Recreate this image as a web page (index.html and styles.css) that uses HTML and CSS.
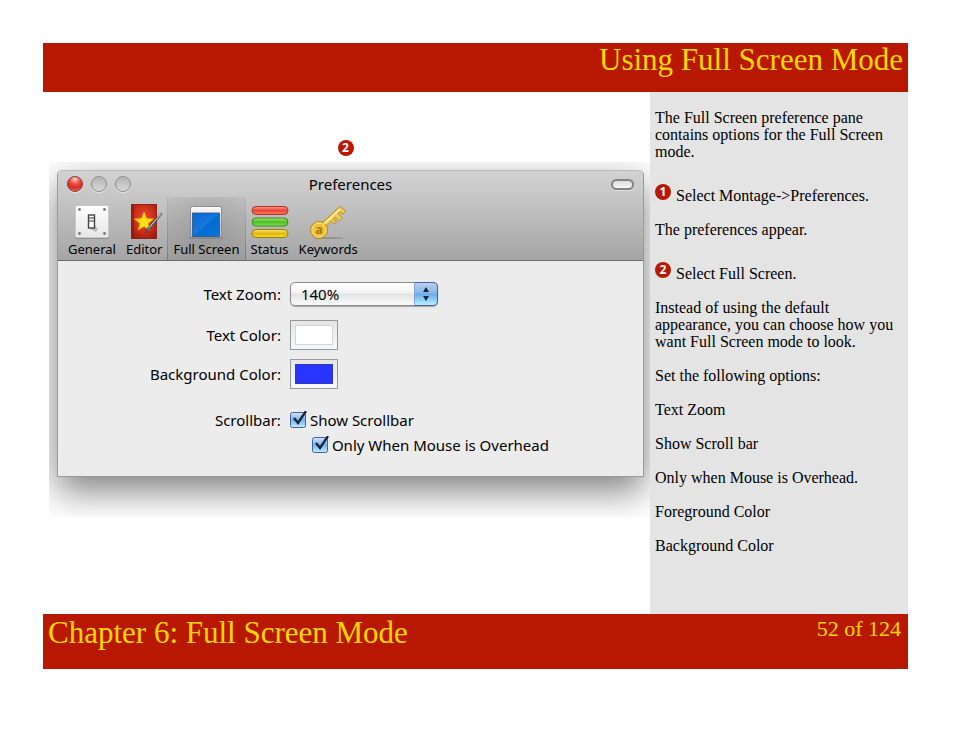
FILE: index.html
```html
<!DOCTYPE html>
<html lang="en">

<head>
    <meta charset="UTF-8">
    <meta name="viewport" content="width=device-width, initial-scale=1.0">
    <title>Using Full Screen Mode</title>
    <link rel="stylesheet" href="styles.css">
</head>

<body>
    <header class="page-header">
        <h1>Using Full Screen Mode</h1>
    </header>

    <main class="page-content">
        <!-- The preferences window with its callout number -->
        <section class="figure">
            <div class="callout"><span class="badge">2</span></div>
            <div class="window-backdrop">
                <div class="window">
                    <div class="window-top">
                        <div class="title-bar">
                            <div class="window-buttons">
                                <button class="window-button close-button" aria-label="Close"></button>
                                <button class="window-button" aria-label="Minimize"></button>
                                <button class="window-button" aria-label="Zoom"></button>
                            </div>
                            <h2>Preferences</h2>
                            <button class="toolbar-toggle" aria-label="Toggle toolbar"></button>
                        </div>
                        <nav class="toolbar">
                            <button class="tool">
                                <svg width="36" height="36" viewBox="0 0 36 36">
                                    <defs>
                                        <linearGradient id="plate" x1="0" y1="0" x2="0" y2="1">
                                            <stop offset="0" stop-color="#fff" />
                                            <stop offset="1" stop-color="#e6e6e6" />
                                        </linearGradient>
                                    </defs>
                                    <path d="M1 34h34" stroke="#858585" stroke-width="1.5" />
                                    <rect x="1.5" y="1.5" width="33" height="32" rx="1" fill="url(#plate)" stroke="#c9c9c9" />
                                    <g fill="#777">
                                        <circle cx="5.5" cy="5.5" r="1.4" />
                                        <circle cx="30.5" cy="5.5" r="1.4" />
                                        <circle cx="5.5" cy="29.5" r="1.4" />
                                        <circle cx="30.5" cy="29.5" r="1.4" />
                                    </g>
                                    <path d="M20 20l4 5-2 3-6-3z" fill="#bbb" />
                                    <rect x="14.5" y="11" width="6" height="13" fill="#fff" stroke="#444" stroke-width="1.4" />
                                    <path d="M15 14h5M15 17h5" stroke="#777" stroke-width="1.3" />
                                </svg>
                                General
                            </button>
                            <button class="tool">
                                <svg width="36" height="36" viewBox="0 0 36 36">
                                    <defs>
                                        <radialGradient id="cover" cx=".5" cy=".4" r=".7">
                                            <stop offset="0" stop-color="#e8482c" />
                                            <stop offset=".6" stop-color="#c92c18" />
                                            <stop offset="1" stop-color="#971a10" />
                                        </radialGradient>
                                    </defs>
                                    <rect x="5.5" y=".5" width="25" height="34" fill="url(#cover)" stroke="#8d2418" />
                                    <path d="M7 1v33" stroke="#7c170d" />
                                    <path d="M18 8l2.5 6.500 7 .5-5.500 4.500 2 6.500-6-3.500-6 3.500 2-6.500L8.500 15l7-.5z" fill="#ffe015" stroke="#f7b412" stroke-width=".7" />
                                    <path d="M35.500 9L23 22l-4 7 6-5L36 10z" fill="#65757c" stroke="#3c484d" stroke-width=".7" />
                                    <path d="M35 10L23 23.500" stroke="#c4d0d3" />
                                </svg>
                                Editor
                            </button>
                            <button class="tool selected">
                                <svg width="36" height="36" viewBox="0 0 36 36">
                                    <defs>
                                        <linearGradient id="screen" x1="0" y1="0" x2="1" y2="1">
                                            <stop offset="0" stop-color="#0a66cf" />
                                            <stop offset=".5" stop-color="#1479dc" />
                                            <stop offset=".5" stop-color="#066bd2" />
                                            <stop offset="1" stop-color="#0874dc" />
                                        </linearGradient>
                                        <linearGradient id="frame" x1="0" y1="0" x2="0" y2="1">
                                            <stop offset="0" stop-color="#fafafa" />
                                            <stop offset="1" stop-color="#bcbcbc" />
                                        </linearGradient>
                                    </defs>
                                    <path d="M1 34h34" stroke="#888" stroke-width="2" />
                                    <path d="M2.500 33.500V4.500q0-2 2-2h27q2 0 2 2v29z" fill="url(#frame)" stroke="#8d8d8d" />
                                    <rect x="4.500" y="9" width="27" height="23.500" fill="url(#screen)" stroke="#24558c" stroke-width=".8" />
                                </svg>
                                Full Screen
                            </button>
                            <button class="tool">
                                <svg width="38" height="36" viewBox="0 0 38 36">
                                    <defs>
                                        <linearGradient id="red-bar" x1="0" y1="0" x2="0" y2="1">
                                            <stop offset="0" stop-color="#ff9b8c" />
                                            <stop offset=".5" stop-color="#e94636" />
                                            <stop offset="1" stop-color="#ff7867" />
                                        </linearGradient>
                                        <linearGradient id="green-bar" x1="0" y1="0" x2="0" y2="1">
                                            <stop offset="0" stop-color="#9be977" />
                                            <stop offset=".5" stop-color="#50bc22" />
                                            <stop offset="1" stop-color="#7ce64d" />
                                        </linearGradient>
                                        <linearGradient id="yellow-bar" x1="0" y1="0" x2="0" y2="1">
                                            <stop offset="0" stop-color="#fbe66c" />
                                            <stop offset=".5" stop-color="#dfb90c" />
                                            <stop offset="1" stop-color="#f8dc35" />
                                        </linearGradient>
                                    </defs>
                                    <rect x="1" y="2.5" width="36" height="8" rx="4" fill="url(#red-bar)" stroke="#b33327" />
                                    <rect x="1" y="14" width="36" height="8" rx="4" fill="url(#green-bar)" stroke="#3c8d1c" />
                                    <rect x="1" y="25.5" width="36" height="8" rx="4" fill="url(#yellow-bar)" stroke="#9b8110" />
                                </svg>
                                Status
                            </button>
                            <button class="tool">
                                <svg width="40" height="36" viewBox="0 0 40 36">
                                    <ellipse cx="21" cy="34" rx="15" ry="1" fill="#939393" />
                                    <g stroke="#b98a1d" stroke-width="1" fill="#f2cb52">
                                        <path d="M14 19L32 2.500l6 4.500-3 3-2.500-2-2 2 4 4-3 3-4-4-2 2 3 3-2 2-3-3-5 5z" />
                                        <circle cx="11" cy="26" r="8.5" fill="#edc23c" />
                                    </g>
                                    <path d="M16 20L32 5" stroke="#fff0a6" stroke-width="1.5" />
                                    <circle cx="11" cy="26" r="7" fill="none" stroke="#fbe283" />
                                    <text x="11" y="30" text-anchor="middle" class="key-letter">a</text>
                                </svg>
                                Keywords
                            </button>
                        </nav>
                    </div>

                    <form class="settings">
                        <div class="field zoom-field">
                            <label for="text-zoom">Text Zoom:</label>
                            <div class="popup">
                                <select id="text-zoom">
                                    <option>140%</option>
                                </select>
                                <span class="popup-arrows">
                                    <svg width="8" height="14" viewBox="0 0 8 14" fill="#1a2433">
                                        <path d="M4 0l3 5H1zM4 14l3-5H1z" />
                                    </svg>
                                </span>
                            </div>
                        </div>
                        <div class="field">
                            <label for="text-color">Text Color:</label>
                            <input type="color" id="text-color" class="color-well light" value="#ffffff">
                        </div>
                        <div class="field">
                            <label for="background-color">Background Color:</label>
                            <input type="color" id="background-color" class="color-well" value="#2a34ff">
                        </div>
                        <div class="field scrollbar-field">
                            <span class="field-name">Scrollbar:</span>
                            <div class="checks">
                                <label class="check"><input type="checkbox" checked>Show Scrollbar</label>
                                <label class="check nested"><input type="checkbox" checked>Only When Mouse is Overhead</label>
                            </div>
                        </div>
                    </form>
                </div>
            </div>
        </section>

        <aside class="sidebar">
            <p>The Full Screen preference pane contains options for the Full Screen mode.</p>
            <p class="step"><span class="badge">1</span> Select Montage-&gt;Preferences.</p>
            <p>The preferences appear.</p>
            <p class="step"><span class="badge">2</span> Select Full Screen.</p>
            <p>Instead of using the default appearance, you can choose how you want Full Screen mode to look.</p>
            <p>Set the following options:</p>
            <p>Text Zoom</p>
            <p>Show Scroll bar</p>
            <p>Only when Mouse is Overhead.</p>
            <p>Foreground Color</p>
            <p>Background Color</p>
        </aside>
    </main>

    <footer class="page-footer">
        <span class="chapter">Chapter 6: Full Screen Mode</span>
        <span class="page-number">52 of 124</span>
    </footer>
</body>

</html>
```
FILE: styles.css
```css
* {
    box-sizing: border-box;
}

body {
    margin: 43px 46px 43px 43px;
    font-family: "Liberation Serif", serif;
    font-size: 16px;
    line-height: 17px;
    color: #000;
    background-color: #fff;
}

button {
    border: 0;
    padding: 0;
    background: none;
    font: inherit;
    color: inherit;
}

/* Red bars above and below the content */
.page-header,
.page-footer {
    background-color: #b91800;
    color: #ffd800;
    padding: 0 5px;
    font-size: 31px;
    line-height: 34px;
}

.page-header {
    height: 49px;
    text-align: right;
}

.page-header h1 {
    margin: 0;
    font-size: 31px;
    font-weight: normal;
}

.page-footer {
    display: flex;
    justify-content: space-between;
    height: 55px;
    padding-right: 7px;
}

.chapter {
    line-height: 38px;
}

.page-number {
    font-size: 22px;
    line-height: 30px;
}

.page-content {
    display: flex;
}

.figure {
    flex: 1;
    padding: 48px 0 0 6px;
}

.callout {
    display: flex;
    justify-content: center;
    height: 22px;
    padding-right: 8px;
}

/* Numbered red circle */
.badge {
    display: inline-block;
    width: 16px;
    height: 16px;
    border-radius: 50%;
    background-color: #b91800;
    color: #fff;
    font: bold 12px/16px "Open Sans", sans-serif;
    text-align: center;
}

/* Cuts the window shadow off at its edges */
.window-backdrop {
    overflow: hidden;
    padding: 8px 6px 40px 8px;
}

.window {
    border: 1px solid #999;
    border-top-color: #bbb;
    border-radius: 5px 5px 0 0;
    background-color: #ececec;
    box-shadow: 0 14px 36px rgba(0, 0, 0, 0.5);
    font-family: "Noto Sans", sans-serif;
    font-size: 15px;
    line-height: 18px;
}

.window-top {
    border-bottom: 1px solid #6b6b6b;
    border-radius: 4px 4px 0 0;
    background: linear-gradient(#d2d2d2, #c6c6c6 30%, #a5a5a5);
}

.title-bar {
    display: grid;
    grid-template-columns: 1fr auto 1fr;
    align-items: center;
    height: 26px;
    padding: 0 9px;
}

.title-bar h2 {
    margin: 0;
    font-size: 15px;
    font-weight: normal;
}

.window-buttons {
    display: flex;
    gap: 8px;
}

.window-button {
    width: 16px;
    height: 16px;
    border: 1px solid #8e8e8e;
    border-radius: 50%;
    background: linear-gradient(#b4b4b4, #d8d8d8);
    box-shadow: 0 1px 0 #e4e4e4;
}

.close-button {
    border-color: #8c3a36;
    background: radial-gradient(circle at 50% 15%, #ffd5cf 0, #ee5148 35%, #d52a25 65%, #ff8d78);
}

.toolbar-toggle {
    justify-self: end;
    width: 23px;
    height: 11px;
    border: 2px solid #838383;
    border-radius: 6px;
    background: linear-gradient(#dcdcdc, #f6f6f6);
    box-shadow: 0 1px 0 #dedede;
}

.toolbar {
    display: flex;
    height: 63px;
    padding-left: 5px;
    font-size: 13px;
    line-height: 18px;
}

.tool {
    display: flex;
    flex-direction: column;
    align-items: center;
    padding: 7px 5px 0;
    white-space: nowrap;
}

.selected {
    border: solid transparent;
    border-width: 0 1px;
    border-image: linear-gradient(#b8b8b8, #777) 1;
    background: radial-gradient(circle, rgba(0, 0, 0, 0.14), rgba(0, 0, 0, 0.04));
}

.key-letter {
    font: bold 12px "Noto Sans", sans-serif;
    fill: #a87813;
}

/* Settings form */
.settings {
    padding: 21px 0 22px 1px;
}

.field {
    display: grid;
    grid-template-columns: 38% 1fr;
    column-gap: 9px;
    align-items: center;
    margin-bottom: 9px;
}

.field > label,
.field-name {
    text-align: right;
}

.zoom-field {
    margin-bottom: 14px;
}

.popup {
    position: relative;
    width: 148px;
}

.popup select {
    appearance: none;
    display: block;
    width: 100%;
    height: 24px;
    padding: 0 10px;
    border: 1px solid #8b8b8b;
    border-radius: 5px;
    background: linear-gradient(#fff, #f2f2f2 45%, #e3e3e3 50%, #fafafa);
    box-shadow: 0 1px 1px rgba(0, 0, 0, 0.3);
    font: inherit;
    color: #000;
}

/* Blue cap lying over the right end of the drop-down */
.popup-arrows {
    position: absolute;
    top: 0;
    right: 0;
    display: flex;
    align-items: center;
    justify-content: center;
    width: 24px;
    height: 24px;
    border: 1px solid #4a5fa0;
    border-left-color: #7fa8d8;
    border-radius: 0 5px 5px 0;
    background: linear-gradient(#b9d0f0, #86b8ec 45%, #68abe9 50%, #b9f0ff);
    pointer-events: none;
}

.color-well {
    appearance: none;
    width: 48px;
    height: 30px;
    padding: 4px;
    border: 1px solid #9299a1;
    background: linear-gradient(#e6e6e6, #f8f8f8);
}

.color-well::-webkit-color-swatch-wrapper {
    padding: 0;
}

.color-well::-webkit-color-swatch {
    border: 1px solid #3338c4;
    border-radius: 0;
}

.light::-webkit-color-swatch {
    border-color: #d4d4d4;
}

.scrollbar-field {
    align-items: start;
    margin: 22px 0 0;
}

.checks {
    display: grid;
    gap: 7px;
}

.check {
    display: flex;
    align-items: center;
    gap: 2px;
}

.nested {
    padding-left: 22px;
}

.check input {
    appearance: none;
    width: 18px;
    height: 18px;
    margin: 0;
    background: url("data:image/svg+xml,%3Csvg xmlns='http://www.w3.org/2000/svg' viewBox='0 0 18 18'%3E%3ClinearGradient id='b' x2='0' y2='1'%3E%3Cstop stop-color='%23d4e4f8'/%3E%3Cstop offset='.5' stop-color='%2374b2ec'/%3E%3Cstop offset='1' stop-color='%23c2f2ff'/%3E%3C/linearGradient%3E%3Crect x='.5' y='1.5' width='15' height='15' rx='2' fill='url(%23b)' stroke='%23455fa0'/%3E%3Cpath d='M4 7l4 5 8-12' fill='none' stroke='%23182438' stroke-width='2.3'/%3E%3C/svg%3E") center / 18px 18px no-repeat;
}

/* Instructions beside the window */
.sidebar {
    width: 258px;
    padding: 17px 5px 60px;
    background-color: #e4e4e4;
}

.sidebar p {
    margin: 0 0 17px;
}

.sidebar p:last-child {
    margin-bottom: 0;
}

.sidebar .step {
    display: flex;
    align-items: flex-end;
    gap: 5px;
    height: 27px;
}

.step .badge {
    margin-bottom: 4px;
}
```
